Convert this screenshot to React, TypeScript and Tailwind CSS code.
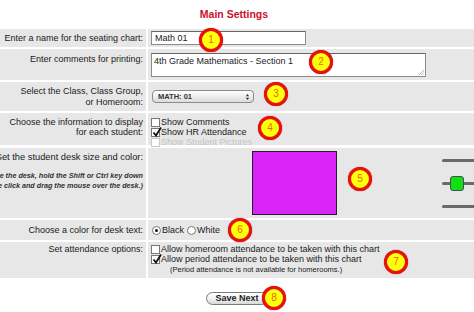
import React from 'react';

// numbered callout badges that sit over the form
const markers = [
    { n: 1, x: 211, y: 40 },
    { n: 2, x: 321, y: 62 },
    { n: 3, x: 276, y: 94 },
    { n: 4, x: 270, y: 128 },
    { n: 5, x: 360, y: 179 },
    { n: 6, x: 240, y: 230 },
    { n: 7, x: 396, y: 262 },
    { n: 8, x: 274, y: 298 },
];

const Marker = ({ n, x, y }: { n: number; x: number; y: number }) => (
    <div
        className="absolute w-[24px] h-[24px] rounded-full bg-[#ffff10] border-[3px] border-[#e8100a] flex items-center justify-center text-[10px] text-[#e86a00] shadow-[0_0_1px_#a00]"
        style={{ left: x - 12, top: y - 12 }}
    >
        {n}
    </div>
);

const Check = ({ checked, disabled }: { checked?: boolean; disabled?: boolean }) => (
    <span
        className={`relative inline-block w-[9px] h-[9px] border bg-white mr-[1px] shrink-0 ${disabled ? 'border-[#c8c8c8]' : 'border-[#777]'}`}
    >
        {checked && (
            <svg viewBox="0 0 10 10" className="absolute left-[0px] top-[-2px] w-[10px] h-[10px]">
                <path d="M1.5 5.5 L4 8.5 L9 0.5" fill="none" stroke="#111" strokeWidth="1.8" />
            </svg>
        )}
    </span>
);

const Radio = ({ checked }: { checked?: boolean }) => (
    <span className="inline-flex items-center justify-center w-[9px] h-[9px] rounded-full border border-[#777] bg-white mr-[1px] shrink-0">
        {checked && <span className="w-[3px] h-[3px] rounded-full bg-[#111]" />}
    </span>
);

const Label = ({ children, className = '' }: { children: React.ReactNode; className?: string }) => (
    <div className={`w-[146px] shrink-0 bg-[#e7e7e7] flex flex-col items-end pr-[3px] whitespace-nowrap ${className}`}>
        {children}
    </div>
);

const Row = ({ h, label, labelClass, children, cellClass = '' }: { h: string; label: React.ReactNode; labelClass?: string; children?: React.ReactNode; cellClass?: string }) => (
    <div className={`flex gap-[2px] ${h}`}>
        <Label className={labelClass}>{label}</Label>
        <div className={`flex-1 bg-[#e7e7e7] pl-[3px] ${cellClass}`}>{children}</div>
    </div>
);

export default function App() {
    return (
        <div className="relative w-[474px] h-[312px] overflow-hidden bg-white text-[9px] text-[#1a1a1a] leading-[10px] font-['Liberation_Sans',Arial,sans-serif]">
            <div className="h-[29px] flex items-center justify-center pr-[6px] pb-[2px] text-[10.5px] font-bold text-[#cc1030]">
                Main Settings
            </div>

            <div className="flex flex-col gap-[2px] w-[520px]">
                <Row h="h-[18px]" label="Enter a name for the seating chart:" labelClass="justify-center" cellClass="flex items-center">
                    <div className="w-[155px] h-[14px] bg-white border border-[#8a8a8a] border-t-[#666] pl-[3px] flex items-center text-[9px]">Math 01</div>
                </Row>

                <Row h="h-[31px]" label="Enter comments for printing:" labelClass="justify-start pt-[5px]" cellClass="pt-[4px]">
                    <div className="relative w-[275px] h-[24px] bg-white border border-[#8a8a8a] border-t-[#666] pl-[2px] pt-[2px]">
                        4th Grade Mathematics - Section 1
                        <svg viewBox="0 0 6 6" className="absolute right-[1px] bottom-[1px] w-[6px] h-[6px]">
                            <path d="M1 6 L6 1 M3.5 6 L6 3.5" stroke="#999" strokeWidth="0.8" />
                        </svg>
                    </div>
                </Row>

                <Row
                    h="h-[29px]"
                    label={<><span>Select the Class, Class Group,</span><span className="mt-[1px]">or Homeroom:</span></>}
                    labelClass="justify-center"
                    cellClass="flex items-center pl-[4px]"
                >
                    <div className="w-[102px] h-[13px] rounded-[4px] border border-[#8a8a8a] bg-gradient-to-b from-white to-[#dcdcdc] flex items-center justify-between pl-[5px] pr-[3px] text-[7.5px] font-bold text-[#333]">
                        MATH: 01
                        <svg viewBox="0 0 6 9" className="w-[5px] h-[8px]">
                            <path d="M1 3.5 L3 1 L5 3.5 Z M1 5.5 L3 8 L5 5.5 Z" fill="#333" />
                        </svg>
                    </div>
                </Row>

                <Row
                    h="h-[32px]"
                    label={<><span>Choose the information to display</span><span>for each student:</span></>}
                    labelClass="justify-start pt-[4px]"
                    cellClass="flex flex-col pt-[4px] pl-[2px]"
                >
                    <div className="flex items-center"><Check />Show Comments</div>
                    <div className="flex items-center"><Check checked />Show HR Attendance</div>
                    <div className="flex items-center text-[#c4c4c4]"><Check disabled />Show Student Pictures</div>
                </Row>

                <Row
                    h="h-[70px] mt-[1px]"
                    label={
                        <>
                            <span className="mt-[4px] text-[9.3px]">Set the student desk size and color:</span>
                            <span className="mt-[9px] italic font-bold text-[#333] text-[7.2px] leading-[10px]">(To resize the desk, hold the Shift or Ctrl key down</span>
                            <span className="italic font-bold text-[#333] text-[7.2px] leading-[10px]">while you double click and drag the mouse over the desk.)</span>
                        </>
                    }
                    cellClass="flex items-start pt-[3px] pl-[104px]"
                >
                    <div className="w-[85px] h-[64px] bg-[#d924f7] border border-[#2a1a30]" />
                    <div className="ml-[105px] mt-[8px] flex flex-col gap-[20px] w-[60px]">
                        <div className="h-[3px] rounded-l-full bg-[#6a6a6a]" />
                        <div className="relative h-[3px] rounded-l-full bg-[#6a6a6a]">
                            <div className="absolute left-[8px] top-[-6px] w-[14px] h-[15px] rounded-[3px] border-[1.5px] border-[#4a4a5a] bg-[#10e010]" />
                        </div>
                        <div className="h-[3px] rounded-l-full bg-[#6a6a6a]" />
                    </div>
                </Row>

                <Row h="h-[20px]" label="Choose a color for desk text:" labelClass="justify-center" cellClass="flex items-center pl-[4px]">
                    <Radio checked />
                    <span>Black</span>
                    <span className="ml-[3px]" />
                    <Radio />
                    <span>White</span>
                </Row>

                <Row
                    h="h-[36px]"
                    label="Set attendance options:"
                    labelClass="justify-start pt-[2px]"
                    cellClass="flex flex-col pt-[2px] pl-[2px]"
                >
                    <div className="flex items-center"><Check />Allow homeroom attendance to be taken with this chart</div>
                    <div className="flex items-center"><Check checked />Allow period attendance to be taken with this chart</div>
                    <div className="pl-[19px] text-[7.5px] leading-[12px]">(Period attendance is not available for homerooms.)</div>
                </Row>
            </div>

            <div className="flex justify-center pt-[14px]">
                <button className="w-[62px] h-[13px] rounded-full border border-[#7a7a7a] bg-gradient-to-b from-white via-[#f2f2f2] to-[#d8d8d8] text-[9px] leading-[11px] font-bold text-[#222]">
                    Save Next
                </button>
            </div>

            {markers.map(m => (
                <Marker key={m.n} {...m} />
            ))}
        </div>
    );
}
